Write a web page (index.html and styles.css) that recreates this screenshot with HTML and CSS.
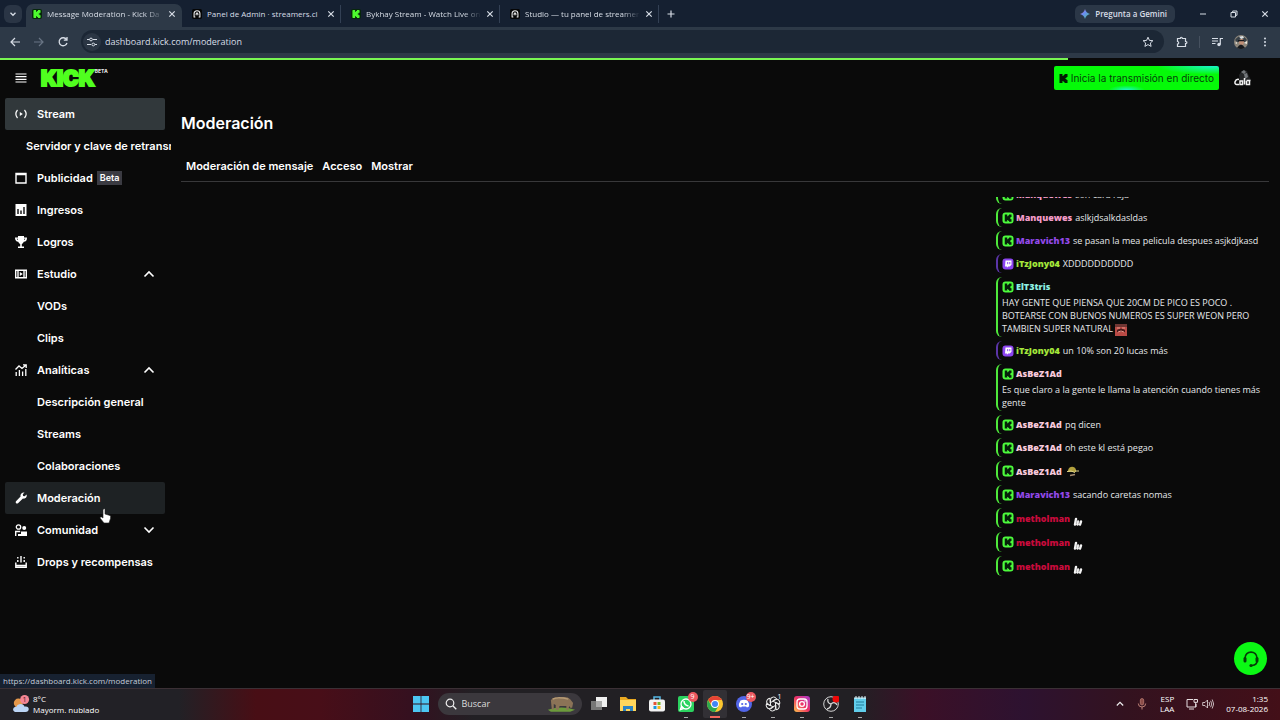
FILE: index.html
```html
<!DOCTYPE html>
<html lang="es">
<head>
<meta charset="utf-8">
<title>Message Moderation - Kick Dashboard</title>
<link rel="stylesheet" href="styles.css">
</head>
<body>
<svg class="defs" aria-hidden="true">
  <symbol id="kmark" viewBox="0 0 24 24"><path d="M1.300 0h8v5.300H12V2.700h2.700V0h8v8H20v2.700h-2.700v2.600H20V16h2.700v8h-8v-2.700H12v-2.600H9.300V24h-8z"/></symbol>
  <symbol id="kick" viewBox="0 0 24 24"><rect x="1" y="1" width="22" height="22" rx="6" fill="#4dfb3c"/><path fill="#06200a" d="M5.500 5h5v3.500H12V7h2V5h5v5h-1.700v1.500H16v1.500h1.300v1.500H19v5h-5v-2h-2v-1.500h-1.500V19h-5z"/></symbol>
  <symbol id="twitch" viewBox="0 0 12 12"><rect x=".5" y=".5" width="11" height="11" rx="3" fill="#8c45f0"/><path fill="#fff" d="M3.500 2.500h6v4.200L7.700 8.500H6.200L4.900 9.800V8.500H3z"/><path stroke="#8c45f0" d="M5.700 4v2.200M7.800 4v2.200"/></symbol>
  <symbol id="arch" viewBox="0 0 12 12"><rect width="12" height="12" rx="2" fill="#050505"/><path d="M2.500 10V5.500C2.500 1 9.500 1 9.500 5.500V10M5 7.500V6c0-1.500 2-1.500 2 0v1.500M2 9.500h2M8 9.500h2" fill="none" stroke="#eee" stroke-width="1.300"/></symbol>
  <symbol id="x" viewBox="0 0 8 8"><path d="M1.300 1.300l5.400 5.400M6.700 1.300L1.300 6.700" stroke="currentColor" stroke-width="1.200"/></symbol>
  <symbol id="up" viewBox="0 0 12 12"><path d="M1.500 8.500L6 4l4.500 4.500" fill="none" stroke="currentColor" stroke-width="1.600"/></symbol>
  <symbol id="bones" viewBox="0 0 10 10"><path d="M2 8.500L3 3M4.500 8.500L5 5.500M7 8.500L8 5.500" stroke="#f4f4f4" stroke-width="2.400" stroke-linecap="round"/><path d="M3.300 8l.8-4M5.800 8l.6-3" stroke="#555" stroke-width=".4"/></symbol>
</svg>

<header class="browser">
  <div class="tabstrip">
    <button class="tabsearch" aria-label="Buscar pestañas"><svg class="i8" viewBox="0 0 8 8"><path d="M1.500 2.800L4 5.300l2.500-2.500" fill="none" stroke="currentColor" stroke-width="1.300"/></svg></button>
    <div class="tab active"><svg class="fav green"><use href="#kmark"/></svg><span class="fade">Message Moderation - Kick Da</span><button aria-label="Cerrar"><svg class="i8"><use href="#x"/></svg></button></div>
    <div class="tab"><svg class="fav"><use href="#arch"/></svg><span>Panel de Admin · streamers.cl</span><button aria-label="Cerrar"><svg class="i8"><use href="#x"/></svg></button></div>
    <div class="tab"><svg class="fav green"><use href="#kmark"/></svg><span class="fade">Bykhay Stream - Watch Live on</span><button aria-label="Cerrar"><svg class="i8"><use href="#x"/></svg></button></div>
    <div class="tab"><svg class="fav"><use href="#arch"/></svg><span class="fade">Studio — tu panel de streamer</span><button aria-label="Cerrar"><svg class="i8"><use href="#x"/></svg></button></div>
    <button class="newtab" aria-label="Nueva pestaña"><svg class="i8" viewBox="0 0 8 8"><path d="M4 .5v7M.5 4h7" stroke="currentColor" stroke-width="1.200"/></svg></button>
    <button class="gemini"><svg viewBox="0 0 12 12"><defs><linearGradient id="gg" x2="1" y2="1"><stop stop-color="#e26b74"/><stop offset=".4" stop-color="#6c8bf5"/><stop offset="1" stop-color="#48c88c"/></linearGradient></defs><path fill="url(#gg)" d="M6 0q1.200 4.800 6 6q-4.800 1.200-6 6q-1.200-4.800-6-6q4.800-1.200 6-6"/></svg>Pregunta a Gemini</button>
    <div class="winbtns">
      <button aria-label="Minimizar"><svg class="i8" viewBox="0 0 8 8"><path d="M1 4h6" stroke="currentColor"/></svg></button>
      <button aria-label="Restaurar"><svg class="i8" viewBox="0 0 8 8"><path d="M1 2.500h4.500V7H1zM2.700 2.500V1H7v4.300H5.500" fill="none" stroke="currentColor"/></svg></button>
      <button aria-label="Cerrar ventana"><svg class="i8"><use href="#x"/></svg></button>
    </div>
  </div>
  <div class="toolbar">
    <button aria-label="Atrás"><svg viewBox="0 0 12 12"><path d="M11 6H2M6 2L2 6l4 4" fill="none" stroke="currentColor" stroke-width="1.200"/></svg></button>
    <button class="dim" aria-label="Adelante"><svg viewBox="0 0 12 12"><path d="M1 6h9M6 2l4 4-4 4" fill="none" stroke="currentColor" stroke-width="1.200"/></svg></button>
    <button aria-label="Recargar"><svg viewBox="0 0 12 12"><path d="M9.500 3.500A4 4 0 1 0 10 7M10 1v3.200H6.800" fill="none" stroke="currentColor" stroke-width="1.300"/></svg></button>
    <div class="address">
      <button class="site" aria-label="Información del sitio"><svg viewBox="0 0 12 12"><path d="M1 3.500h2.500M7 3.500h4M1 8.500h4M9 8.500h2" stroke="currentColor" stroke-width="1.200"/><circle cx="5" cy="3.500" r="1.400" fill="none" stroke="currentColor"/><circle cx="7.300" cy="8.500" r="1.400" fill="none" stroke="currentColor"/></svg></button>
      <input aria-label="Dirección" value="dashboard.kick.com/moderation">
      <button aria-label="Favorito"><svg viewBox="0 0 12 12"><path d="M6 1.200l1.400 3.200 3.500.3-2.600 2.300.8 3.400L6 8.600l-3.100 1.800.8-3.400L1.100 4.700l3.500-.3z" fill="none" stroke="currentColor"/></svg></button>
    </div>
    <div class="tools">
      <button aria-label="Extensiones"><svg viewBox="0 0 12 12"><path d="M1.500 2.500h2.800c-.3-1.700 2.300-1.700 2 0h3.200v3c1.800-.2 1.800 2.200 0 2v3h-8V8c1.600 0 1.600-2.500 0-2.500z" fill="none" stroke="currentColor" stroke-width="1.200"/></svg></button>
      <i class="rule"></i>
      <button aria-label="Multimedia"><svg viewBox="0 0 12 12"><path d="M1 2.500h6M1 5h6M1 7.500h3.500M9.300 8.500v-6H12" fill="none" stroke="currentColor" stroke-width="1.200"/><circle cx="8" cy="8.500" r="1.700" fill="currentColor"/></svg></button>
      <button aria-label="Perfil"><svg class="face" viewBox="0 0 14 14"><circle cx="7" cy="7" r="7" fill="#8d857a"/><path d="M1 5q6-8 12 0l-2 2H3z" fill="#384047"/><path d="M5 1.500l4-.5 1 2-3 1z" fill="#dfe3e4"/><ellipse cx="7.500" cy="7" rx="2.500" ry="3" fill="#c08f76"/><path d="M3 13q4-7 8 0-4 2-8 0M4 5h6v1.300H4z" fill="#16191d"/><path d="M10 8l3-2v3zM1 8l2-1v2z" fill="#e9e5dc"/></svg></button>
      <button aria-label="Menú"><svg viewBox="0 0 12 12" fill="currentColor"><circle cx="6" cy="2.500" r="1"/><circle cx="6" cy="6" r="1"/><circle cx="6" cy="9.500" r="1"/></svg></button>
    </div>
  </div>
</header>

<div class="page">
  <div class="progress"></div>
  <header class="top">
    <button class="burger" aria-label="Menú"><svg viewBox="0 0 12 12"><path d="M.5 2h11M.5 4.700h11M.5 7.300h11M.5 10h11" stroke="currentColor" stroke-width="1.200"/></svg></button>
    <a class="logo" href="#">KICK<sup>BETA</sup></a>
    <button class="golive"><svg><use href="#kmark"/></svg>Inicia la transmisión en directo</button>
    <button class="avatar" aria-label="Cuenta"><svg viewBox="0 0 20 20"><path d="M6 7l2-3 3-2 3 1 1 3 3 6-3 3-8-2z" fill="#242628"/><path d="M8 4l3-2 2 2-2 2zM11 6l3-1 1 4-3 2z" fill="#73777b"/><path d="M6 11.500c-4-1-5.500 5-2.500 5H6M7 13h2.500v3.500H7zM11.500 10v6.500M13.500 13v3.500h3v-4M13.500 12.500h4" fill="none" stroke="#f1f1f1" stroke-width="1.500"/></svg></button>
  </header>
  <div class="body">
    <nav class="side">
      <a class="item current" href="#"><svg viewBox="0 0 12 12"><path d="M2.500 2q-3.300 4 0 8M9.500 2q3.300 4 0 8" fill="none" stroke="currentColor" stroke-width="1.200"/><path d="M4.800 4l3 2-3 2z" fill="currentColor"/></svg>Stream</a>
      <a class="item key" href="#">Servidor y clave de retransmisión</a>
      <a class="item" href="#"><svg viewBox="0 0 12 12"><path d="M1 1.500h10v9.500H1zM1 2.500h10" fill="none" stroke="currentColor" stroke-width="1.400"/></svg>Publicidad<span class="beta">Beta</span></a>
      <a class="item" href="#"><svg viewBox="0 0 12 12"><path d="M.5 0h11v12H.5z" fill="currentColor"/><path d="M3 5v5M6 6.500V10M9 3v7" stroke="#0b0b0c" stroke-width="1.400"/></svg>Ingresos</a>
      <a class="item" href="#"><svg viewBox="0 0 12 12"><path d="M3 0h6v1.500h3c0 3-1 4-3.200 4.300Q8 7.500 6.800 8v2.500H9V12H3v-1.500h2.200V8Q4 7.500 3.200 5.800 0 5.500 0 1.500h3z" fill="currentColor"/><path d="M1.500 2.700H3V4zM10.500 2.700H9V4z" fill="#0b0b0c"/></svg>Logros</a>
      <button class="item"><svg viewBox="0 0 12 12"><path d="M.7 2.200h10.600v7.600H.7zM3 2v8M9 2v8" fill="none" stroke="currentColor" stroke-width="1.400"/><path d="M4.800 4l3 2-3 2z" fill="currentColor"/></svg>Estudio<svg class="chev"><use href="#up"/></svg></button>
      <a class="item sub" href="#">VODs</a>
      <a class="item sub" href="#">Clips</a>
      <button class="item"><svg viewBox="0 0 12 12"><path d="M1.200 12V8M4.400 12V6M7.600 12V7.500M10.800 12V5M.5 5.500L4 2l3 2.500L11 1M8 .8h3.200V4" fill="none" stroke="currentColor" stroke-width="1.300"/></svg>Analíticas<svg class="chev"><use href="#up"/></svg></button>
      <a class="item sub" href="#">Descripción general</a>
      <a class="item sub" href="#">Streams</a>
      <a class="item sub" href="#">Colaboraciones</a>
      <a class="item hover" href="#"><svg viewBox="0 0 12 12"><path d="M9.500.5L7.800 2.300l.3 1.600 1.600.3L11.500 2.500c1 2.500-1 4.700-3.600 4L3 11.300c-1.300 1-3-.7-2-2L5.600 4.500C4.900 2 7 0 9.500.5" fill="currentColor"/></svg>Moderación</a>
      <button class="item"><svg viewBox="0 0 12 12"><circle cx="3.500" cy="3" r="2.200" fill="none" stroke="currentColor" stroke-width="1.300"/><circle cx="9.200" cy="4" r="2" fill="currentColor"/><path d="M.7 12V7.500h4.500" fill="none" stroke="currentColor" stroke-width="1.400"/><path d="M6 7.500h6V12H6zM3 10h3v2H3z" fill="currentColor"/></svg>Comunidad<svg class="chev down"><use href="#up"/></svg></button>
      <a class="item" href="#"><svg viewBox="0 0 12 12"><path d="M.8 6.500v4.700h10.400V6.500M.8 9.500h10.400M6 0v6.500M2.800 1v1.500M2.800 4v2M9.200 1v1.500M9.200 4v2" fill="none" stroke="currentColor" stroke-width="1.400"/></svg>Drops y recompensas</a>
    </nav>
    <main>
      <h1>Moderación</h1>
      <nav class="sections"><a href="#">Moderación de mensaje</a><a href="#">Acceso</a><a href="#">Mostrar</a></nav>
      <section class="chat" aria-label="Chat">
        <div class="msg"><p><svg><use href="#kick"/></svg><b class="pink">Manquewes</b>son cara raja</p></div>
        <div class="msg"><p><svg><use href="#kick"/></svg><b class="pink">Manquewes</b>aslkjdsalkdasldas</p></div>
        <div class="msg"><p><svg><use href="#kick"/></svg><b class="violet">Maravich13</b>se pasan la mea pelicula despues asjkdjkasd</p></div>
        <div class="msg tw"><p><svg><use href="#twitch"/></svg><b class="lime">iTzJony04</b>XDDDDDDDDDD</p></div>
        <div class="msg long"><p><svg><use href="#kick"/></svg><b class="aqua">ElT3tris</b></p><div>HAY GENTE QUE PIENSA QUE 20CM DE PICO ES POCO .<br>BOTEARSE CON BUENOS NUMEROS ES SUPER WEON PERO<br>TAMBIEN SUPER NATURAL <svg class="emote" viewBox="0 0 12 12"><path fill="#b94a45" d="M0 0h12v12H0z"/><path d="M0 0h12v3H0z" fill="#703633"/><path d="M2 6q4-3 8 0v2H2z" fill="#4b191b"/><path d="M3 8q3-2 6 0M2 4h3M7 4h3" fill="none" stroke="#e89486"/></svg></div></div>
        <div class="msg tw"><p><svg><use href="#twitch"/></svg><b class="lime">iTzJony04</b>un 10% son 20 lucas más</p></div>
        <div class="msg long"><p><svg><use href="#kick"/></svg><b class="rose">AsBeZ1Ad</b></p><div>Es que claro a la gente le llama la atención cuando tienes más<br>gente</div></div>
        <div class="msg"><p><svg><use href="#kick"/></svg><b class="rose">AsBeZ1Ad</b>pq dicen</p></div>
        <div class="msg"><p><svg><use href="#kick"/></svg><b class="rose">AsBeZ1Ad</b>oh este kl está pegao</p></div>
        <div class="msg em"><p><svg><use href="#kick"/></svg><b class="rose">AsBeZ1Ad</b><svg class="cap" viewBox="0 0 12 12"><path d="M1 6c0-5 7-6 8-1v2H1z" fill="#b2a13d"/><path d="M0 6.500q4-1.500 8 1M8 6h4" fill="none" stroke="#ddd28b"/><path d="M3 10.500l5-1" stroke="#a58b70" stroke-width="1.500"/></svg></p></div>
        <div class="msg"><p><svg><use href="#kick"/></svg><b class="violet">Maravich13</b>sacando caretas nomas</p></div>
        <div class="msg em"><p><svg><use href="#kick"/></svg><b class="red">metholman</b><svg class="bones"><use href="#bones"/></svg></p></div>
        <div class="msg em"><p><svg><use href="#kick"/></svg><b class="red">metholman</b><svg class="bones"><use href="#bones"/></svg></p></div>
        <div class="msg em"><p><svg><use href="#kick"/></svg><b class="red">metholman</b><svg class="bones"><use href="#bones"/></svg></p></div>
      </section>
    </main>
  </div>
  <div class="status">https://dashboard.kick.com/moderation</div>
  <button class="help" aria-label="Ayuda"><svg viewBox="0 0 18 18"><path d="M3 8.500C3 0 15 0 15 8.500M15 11q0 4-5 4.500" fill="none" stroke="#063b08" stroke-width="1.700"/><rect x="1.500" y="7" width="3" height="5.500" rx="1.500" fill="#063b08"/><rect x="13.500" y="7" width="3" height="5.500" rx="1.500" fill="#063b08"/><circle cx="9" cy="15.500" r="1.600" fill="#063b08"/></svg></button>
</div>

<svg class="pointer" viewBox="0 0 12 16"><path d="M4 1.500q1.500-1.500 2 0V6l5 1.500q1 .7.500 3L10 15H5L1 10q0-1.500 1.500-1L4 10z" fill="#fff" stroke="#222" stroke-width=".6"/></svg>

<footer class="taskbar">
  <button class="weather"><svg viewBox="0 0 20 20"><circle cx="7" cy="9" r="5" fill="#e5984b"/><path d="M5 19c-5 0-5-6 0-6 1-4 8-4 9 0 6-1 6 6 1 6z" fill="#bcd5f5"/><circle cx="14" cy="5" r="5" fill="#f58694"/><text x="14" y="8" text-anchor="middle">1</text></svg><span>8°C<br>Mayorm. nublado</span></button>
  <div class="apps">
    <button aria-label="Inicio"><svg viewBox="0 0 16 16"><path d="M0 0h7.600v7.600H0zM8.400 0H16v7.600H8.400zM0 8.400h7.600V16H0zM8.400 8.400H16V16H8.400z" fill="#4cc6f2"/></svg></button>
    <label class="search"><svg viewBox="0 0 12 12"><circle cx="5" cy="5" r="3.800" fill="none" stroke="#eee" stroke-width="1.200"/><path d="M7.800 7.800l3.500 3.500" stroke="#eee" stroke-width="1.300"/></svg><input type="search" placeholder="Buscar" aria-label="Buscar"><svg class="beast" viewBox="0 0 30 18"><path d="M1 15q14-5 28 0l-5 2H4z" fill="#6d9b3c"/><path d="M4 5q2-4 8-2 8-3 12 1l3 4-1 5h-2l-1-2-1 4h-2v-4h-7l-1 4H9v-5l-2-1v6H5z" fill="#8b7357"/><path d="M6 4q5-3 16 0" stroke="#b79b75" stroke-width="1.500" fill="none"/></svg></label>
    <button aria-label="Vista de tareas"><svg viewBox="0 0 16 16"><path fill="#f0f0f0" d="M5 1h11v10H5z"/><path fill="#777" d="M0 5h11v9H0z"/><path fill="#aaa" d="M5 5h6v6H5z"/></svg></button>
    <button aria-label="Explorador"><svg viewBox="0 0 16 16"><path fill="#e9a921" d="M0 1h6l2 2h8v12H0z"/><path fill="#ffd65c" d="M0 4h16v11H0z"/><path fill="#2b83c3" d="M3 15v-5h10v5h-3v-2H6v2z"/></svg></button>
    <button aria-label="Store"><svg viewBox="0 0 16 16"><path d="M5 4V1h6v3" fill="none" stroke="#55b7e3" stroke-width="1.500"/><rect y="3.500" width="16" height="12" rx="2" fill="#f3f3f3"/><path fill="#e45335" d="M4.500 6h3v3h-3z"/><path fill="#76b82a" d="M8.500 6h3v3h-3z"/><path fill="#1898dc" d="M4.500 10h3v3h-3z"/><path fill="#f2b817" d="M8.500 10h3v3h-3z"/></svg></button>
    <button class="run" aria-label="WhatsApp"><svg viewBox="0 0 16 16"><rect width="16" height="16" rx="2" fill="#2bd35f"/><circle cx="8" cy="8" r="5" fill="none" stroke="#fff" stroke-width="1.300"/><path d="M2.500 13.500l1-3 2 2zM6 5q0 4 4.500 5" fill="none" stroke="#fff" stroke-width="1.500"/></svg><span class="badge">9</span></button>
    <button class="run chrome" aria-label="Chrome"><svg viewBox="0 0 16 16"><circle cx="8" cy="8" r="8" fill="#fbc62f"/><path d="M1.100 4a8 8 0 0 1 13.800 0H8v8z" fill="#e64335"/><path d="M1.100 4A8 8 0 0 0 8 16l3.500-6H4.500z" fill="#2da94f"/><circle cx="8" cy="8" r="3.900" fill="#fff"/><circle cx="8" cy="8" r="3" fill="#4286f4"/></svg></button>
    <button class="run" aria-label="Discord"><svg viewBox="0 0 16 16"><circle cx="8" cy="8" r="8" fill="#5266e8"/><path d="M4.500 4.500Q8 3 11.500 4.500q2 3 1.500 6l-2 1-1-1H6l-1 1-2-1q-.5-3 1.500-6" fill="#fff"/><circle cx="6.200" cy="8" r="1.100" fill="#5266e8"/><circle cx="9.800" cy="8" r="1.100" fill="#5266e8"/></svg><span class="badge">9+</span></button>
    <button class="run" aria-label="ChatGPT"><svg viewBox="0 0 16 16"><g fill="none" stroke="#eee" stroke-width="1"><path id="petal" d="M5.500 9.500V4q0-3 3-3 2 0 3 1.500L7.500 5"/><use href="#petal" transform="rotate(60 8 8)"/><use href="#petal" transform="rotate(120 8 8)"/><use href="#petal" transform="rotate(180 8 8)"/><use href="#petal" transform="rotate(240 8 8)"/><use href="#petal" transform="rotate(300 8 8)"/></g></svg><span class="badge plain">1</span></button>
    <button class="run" aria-label="Instagram"><svg viewBox="0 0 16 16"><defs><linearGradient id="ig" x1="0" y1="1" x2="1" y2="0"><stop stop-color="#ffc34b"/><stop offset=".5" stop-color="#ed3264"/><stop offset="1" stop-color="#a73bd0"/></linearGradient></defs><rect width="16" height="16" rx="3" fill="url(#ig)"/><rect x="3" y="3" width="10" height="10" rx="3" fill="none" stroke="#fff" stroke-width="1.300"/><circle cx="8" cy="8" r="2.400" fill="none" stroke="#fff" stroke-width="1.300"/><circle cx="11" cy="5" r=".8" fill="#fff"/></svg></button>
    <button class="run" aria-label="OBS"><svg viewBox="0 0 16 16"><circle cx="8" cy="8" r="7.300" fill="#242226" stroke="#d4d4d4"/><path d="M8 8q-4-1-3-5M8 8q4-3 6 1M8 8q0 4-4 5" fill="none" stroke="#d4d4d4" stroke-width="1.300"/><circle cx="13" cy="3" r="3.500" fill="#ef0808"/></svg></button>
    <button class="run" aria-label="Bloc de notas"><svg viewBox="0 0 16 16"><path fill="#61cdeb" d="M2 2h12v14H2z"/><path d="M2 2h12M4 0v3M7 0v3M10 0v3M13 0v3" stroke="#d8f4fb"/><path d="M4 6h8M4 9h8M4 12h6" stroke="#217e9c" stroke-width="1.200"/></svg></button>
  </div>
  <div class="tray">
    <button aria-label="Iconos ocultos"><svg class="i8" viewBox="0 0 8 8"><path d="M.8 5.500L4 2.300l3.200 3.200" fill="none" stroke="#eee" stroke-width="1.200"/></svg></button>
    <svg viewBox="0 0 12 12"><rect x="4.300" y=".5" width="3.400" height="6.500" rx="1.700" fill="#8c4d49" stroke="#bd8177" stroke-width=".7"/><path d="M2.300 5.500q0 3.500 3.700 3.500t3.700-3.500M6 9v2.500" fill="none" stroke="#bd8177"/></svg>
    <span class="lang">ESP<br>LAA</span>
    <span class="sys"><svg viewBox="0 0 12 12"><path d="M7 1.500H1v7.500h9V6M3 11h5M8 1.500h3.500v2.800H8zM9.700 4.300V9" fill="none" stroke="#e7dfe1"/></svg><svg viewBox="0 0 12 12"><path d="M.7 4.500H3L5.500 2v8L3 7.500H.7zM7 4q1.500 2 0 4M8.600 2.800q2.400 3.200 0 6.400M10.200 1.500q3 4.500 0 9" fill="none" stroke="#e7dfe1" stroke-width=".8"/></svg></span>
    <time>1:35<br>07-08-2026</time>
  </div>
</footer>
</body>
</html>
```
FILE: styles.css
```css
* { box-sizing: border-box; }
body {
  margin: 0;
  height: 100vh;
  display: flex;
  flex-direction: column;
  overflow: hidden;
  background: #0a0a0a;
  color: #fff;
  font: 8px/12px "Open Sans", "Noto Sans", sans-serif;
}
button { display: inline-flex; align-items: center; justify-content: center; padding: 0; border: 0; background: none; color: inherit; font: inherit; }
input { min-width: 0; padding: 0; border: 0; outline: 0; background: none; color: inherit; font: inherit; }
a { color: inherit; text-decoration: none; }
h1, p { margin: 0; }
svg { width: 12px; height: 12px; flex: none; }
.i8 { width: 8px; height: 8px; }
.defs { position: absolute; width: 0; height: 0; }

/* Browser window */
.browser { background: #2d3947; color: #d7dde6; }
.tabstrip { display: flex; align-items: center; height: 27px; padding: 0 0 0 4px; background: #152031; }
.tabsearch { width: 18px; height: 18px; border-radius: 6px; background: #2a3545; }
.tab { display: flex; align-items: center; gap: 5px; width: 159px; height: 18px; padding: 0 5px 0 10px; border-right: 1px solid #334054; }
.tab.active { width: 156px; height: 23px; margin: 4px 0 0 4px; padding: 0 6px 4px; border: 0; border-radius: 7px 7px 0 0; background: #2d3947; }
.tab span { flex: 1; white-space: nowrap; }
.fade { mask-image: linear-gradient(90deg, #000 85%, transparent); }
.fav { width: 10px; height: 10px; }
.green { padding: 1px; background: #06270a; fill: #4dfb2e; border-radius: 2px; }
.newtab { width: 24px; height: 18px; }
.gemini { gap: 5px; height: 18px; margin-left: auto; padding: 0 8px 0 5px; border-radius: 6px; background: #2b3747; font-weight: 600; }
.gemini svg { width: 10px; height: 10px; }
.winbtns { display: flex; margin-left: 11px; padding-left: 1px; }
.winbtns button { width: 31px; height: 18px; }
.toolbar { display: flex; align-items: center; height: 31px; padding: 0 9px 2px; gap: 12px; }
.dim { color: #697585; }
.address { display: flex; align-items: center; flex: 1; height: 23px; padding: 0 10px 0 2px; gap: 4px; border-radius: 12px; background: #1c2735; }
.address input { flex: 1; font-size: 9px; }
.site { width: 18px; height: 18px; border-radius: 9px; background: #2b3644; }
.tools { display: flex; align-items: center; gap: 11px; }
.rule { width: 1px; height: 12px; background: #46515f; }
.face { width: 14px; height: 14px; }

/* Dashboard */
.page { position: relative; flex: 1; min-height: 0; display: flex; flex-direction: column; font-family: Inter, sans-serif; }
.progress { width: 83.4%; height: 2px; background: #78f552; }
.top { display: flex; align-items: center; height: 36px; padding: 0 27px 0 15px; }
.burger { margin-right: 14px; }
.logo { display: flex; padding-top: 1px; color: #50ff1f; font-size: 21px; font-weight: 900; line-height: 24px; -webkit-text-stroke: 2px #50ff1f; }
.logo sup { color: #ddd; font-size: 5px; line-height: 8px; font-weight: 800; -webkit-text-stroke: 0; }
.golive { gap: 3px; height: 24px; margin-left: auto; padding: 0 5px; border-radius: 2px; font-size: 10px; font-weight: 400; color: #063f09; background: radial-gradient(ellipse at 96% 0, #19f4ca 0, transparent 25%), radial-gradient(ellipse at 44% 100%, #19f4ca 0, transparent 14%), #05fa08; }
.golive svg { width: 9px; height: 9px; fill: #031d04; }
.avatar { margin-left: 14px; }
.avatar svg { width: 20px; height: 20px; }
.body { display: flex; flex: 1; min-height: 0; }
.side { display: flex; flex-direction: column; width: 171px; padding: 2px 0 0 5px; overflow: hidden; }
.item { display: flex; justify-content: flex-start; align-items: center; flex: none; gap: 10px; width: 160px; height: 32px; padding: 0 10px; border-radius: 2px; font-size: 11px; line-height: 16px; font-weight: 600; white-space: nowrap; text-align: left; }
.current { background: #31383b; }
.hover { background: #1e2224; }
.key { width: 166px; padding: 0 0 0 21px; overflow: hidden; }
.sub { padding-left: 32px; }
.beta { margin-left: -6px; padding: 0 3px; background: #3b3b42; font-size: 9px; line-height: 14px; }
.chev { margin-left: auto; }
.down { transform: rotate(180deg); }
main { flex: 1; min-width: 0; display: flex; flex-direction: column; padding: 16px 11px 0 10px; }
h1 { font-size: 16px; line-height: 22px; font-weight: 600; }
.sections { display: flex; gap: 9px; margin-top: 24px; padding: 0 5px 7px; border-bottom: 1px solid #38383a; font-size: 11px; line-height: 16px; font-weight: 600; }
.chat { display: flex; flex-direction: column; justify-content: flex-end; gap: 4px; align-self: flex-end; width: 273px; height: 379px; margin-top: 15px; overflow: hidden; font: 9px/13px "Open Sans", "Noto Sans", sans-serif; color: #e6e8ea; }
.msg { flex: none; padding-left: 4px; border-left: 2px solid #4ee83b; border-radius: 6px; white-space: nowrap; }
.msg p { display: flex; align-items: center; height: 19px; }
.msg.em p { height: 20px; }
.msg.tw { border-color: #5b35a8; }
.long { padding-bottom: 2px; }
.msg b { margin: 0 3px 0 2px; font-weight: 800; }
.emote { margin: -2px 0; vertical-align: middle; }
.cap { margin-left: 2px; }
.bones { width: 10px; height: 10px; margin-top: 5px; }
.pink { color: #f39bc8; }
.violet { color: #9248e8; }
.lime { color: #a4e63a; }
.aqua { color: #8ff0e2; }
.rose { color: #f7c9dc; }
.red { color: #c80b3c; }
.status { position: absolute; left: 0; bottom: 0; height: 14px; padding: 0 3px; background: #172130; color: #c3ccd9; font: 8px/14px "Open Sans", sans-serif; }
.help { position: absolute; right: 13px; bottom: 13px; width: 33px; height: 33px; border-radius: 50%; background: #0bf914; }
.help svg { width: 18px; height: 18px; }
.pointer { position: absolute; left: 99px; top: 508px; width: 12px; height: 16px; }

/* Taskbar */
.taskbar { display: grid; grid-template-columns: 1fr auto 1fr; align-items: center; height: 32px; padding-bottom: 1px; border-top: 1px solid #3b3035; background: linear-gradient(90deg, #222126 0, #222126 14%, #480e15 20%, #480e18 25%, #35101f 32%, #222024 37%, #222024 67%, #3b1027 72%, #2d1230 80%, #33121f 88%, #430f18 100%); }
.weather { justify-self: start; gap: 3px; padding-left: 12px; text-align: left; line-height: 11px; }
.weather svg { width: 18px; height: 20px; }
.weather text { font-size: 8px; fill: #42151d; }
.apps { display: flex; align-items: center; gap: 5px; }
.apps button { position: relative; width: 24px; height: 28px; }
.apps button > svg { width: 16px; height: 16px; }
.search { display: flex; align-items: center; width: 144px; height: 22px; padding: 0 6px 0 7px; gap: 5px; border-radius: 11px; background: #3b383d; font-size: 9px; }
.search input { flex: 1; }
.search input::placeholder { color: #ddd; opacity: 1; }
.search .beast { width: 29px; height: 18px; }
.run::after { content: ""; position: absolute; bottom: 0; width: 4px; height: 1px; background: #aaa; }
.chrome { background: #323035; border-radius: 2px; }
.chrome::after { width: 10px; height: 2px; background: #f2655c; }
.badge { position: absolute; top: 2px; right: 0; width: 10px; height: 10px; border-radius: 5px; background: #ec5860; color: #fff; font-size: 7px; line-height: 10px; text-align: center; }
.plain { background: none; }
.tray { justify-self: end; display: flex; align-items: center; gap: 12px; padding-right: 12px; line-height: 10px; }
.tray time, .lang { text-align: right; }
.sys { display: flex; gap: 4px; }
```
